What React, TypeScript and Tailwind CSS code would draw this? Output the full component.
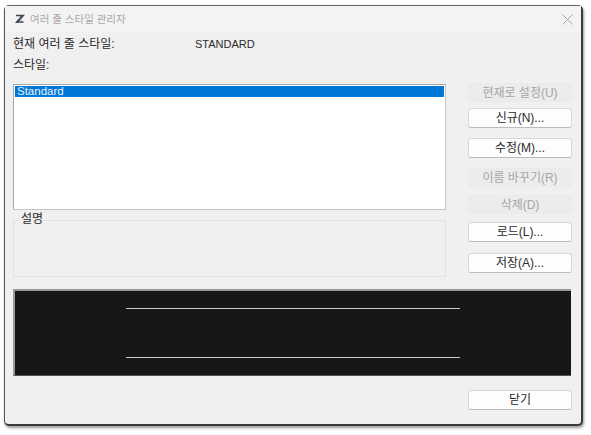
import React from "react";

const font = "font-['Liberation_Sans','Noto_Sans_CJK_KR',sans-serif]";

const Btn = ({ label, disabled, className = "" }: { label: string; disabled?: boolean; className?: string }) => (
  <button
    disabled={disabled}
    className={`w-[104px] flex items-center justify-center rounded-[3px] text-[12px] leading-none border ${
      disabled
        ? "h-[19px] bg-[#ececec] border-[#eaeaea] text-[#a6a6a6]"
        : "h-[20px] bg-[#fdfdfd] border-[#d8d8d8] border-b-[#bcbcbc] text-[#2a2a2a]"
    } ${className}`}
  >
    {label}
  </button>
);

export default function App() {
  return (
    <div className={`w-[591px] h-[435px] bg-white pt-[5px] pl-[4px] overflow-hidden ${font}`}>
      <div className="w-[579px] h-[421px] bg-[#f0f0f0] rounded-[5px] border border-[#3a3a3a] border-l-[#555555] border-t-[#666666] border-r-2 border-b-2 shadow-[1px_2px_3px_rgba(0,0,0,0.4)] flex flex-col">
        {/* Title bar */}
        <div className="h-[26px] shrink-0 flex items-center justify-between bg-[#f3f3f3] pl-[9px] pr-[8px]">
          <div className="flex items-center gap-[5px]">
            <svg width="11" height="10" viewBox="0 0 11 10">
              <path d="M2 1.5 H9.5 L3.5 8 H9.5" fill="none" stroke="#3f4852" strokeWidth="1.3" />
              <path d="M7.5 1 L1 9 H3.5 L10 1 Z" fill="#3f4852" />
              <path d="M5 4 L8 6.5" fill="none" stroke="#8a9199" strokeWidth="1" />
            </svg>
            <span className="text-[10.5px] text-[#a8a8a8] leading-none">여러 줄 스타일 관리자</span>
          </div>
          <svg width="11" height="11" viewBox="0 0 11 11" stroke="#a8a8a8" strokeWidth="1">
            <path d="M0.5 0.5 L10.5 10.5 M10.5 0.5 L0.5 10.5" />
          </svg>
        </div>

        <div className="flex-1 pl-[8px] pr-[9px] flex flex-col">
          {/* Current style */}
          <div className="flex items-center h-[22px] mt-px text-[12px] text-[#2a2a2a]">
            <span className="w-[182px]">현재 여러 줄 스타일:</span>
            <span className="text-[11px]">STANDARD</span>
          </div>
          <div className="h-[20px] flex items-center text-[12px] text-[#2a2a2a]">스타일:</div>

          {/* List and buttons */}
          <div className="mt-[9px] flex justify-between">
            <div className="w-[433px] flex flex-col">
              <div className="h-[126px] bg-white border border-[#a8a8a8] border-b-[#c4c4c4] border-r-[#c4c4c4] p-px">
                <div className="h-[11px] bg-[#0078d7] text-[#e8f2fb] text-[11.5px] leading-[11px] pl-[2px]">Standard</div>
              </div>
              <div className="relative mt-[10px] h-[57px] border border-[#e2e2e2]">
                <span className="absolute left-[6px] top-[-9px] bg-[#f0f0f0] px-px text-[12px] leading-[14px] text-[#2a2a2a]">설명</span>
              </div>
            </div>
            <div className="w-[104px] flex flex-col -mt-[1px]">
              <Btn label="현재로 설정(U)" disabled />
              <Btn label="신규(N)..." className="mt-[6px]" />
              <Btn label="수정(M)..." className="mt-[10px]" />
              <Btn label="이름 바꾸기(R)" disabled className="mt-[10px]" />
              <Btn label="삭제(D)" disabled className="mt-[8px]" />
              <Btn label="로드(L)..." className="mt-[8px]" />
              <Btn label="저장(A)..." className="mt-[11px]" />
            </div>
          </div>

          {/* Preview */}
          <div className="mt-[12px] mr-px h-[87px] bg-[#171717] border-t-2 border-l-2 border-[#9a9a9a] border-b border-b-[#555555] flex flex-col justify-center items-start pl-[111px] gap-[48px]">
            <div className="w-[334px] h-px bg-[#c8c8c8]" />
            <div className="w-[334px] h-px bg-[#c8c8c8]" />
          </div>

          <div className="mt-[14px] flex justify-end">
            <Btn label="닫기" />
          </div>
        </div>
      </div>
    </div>
  );
}
